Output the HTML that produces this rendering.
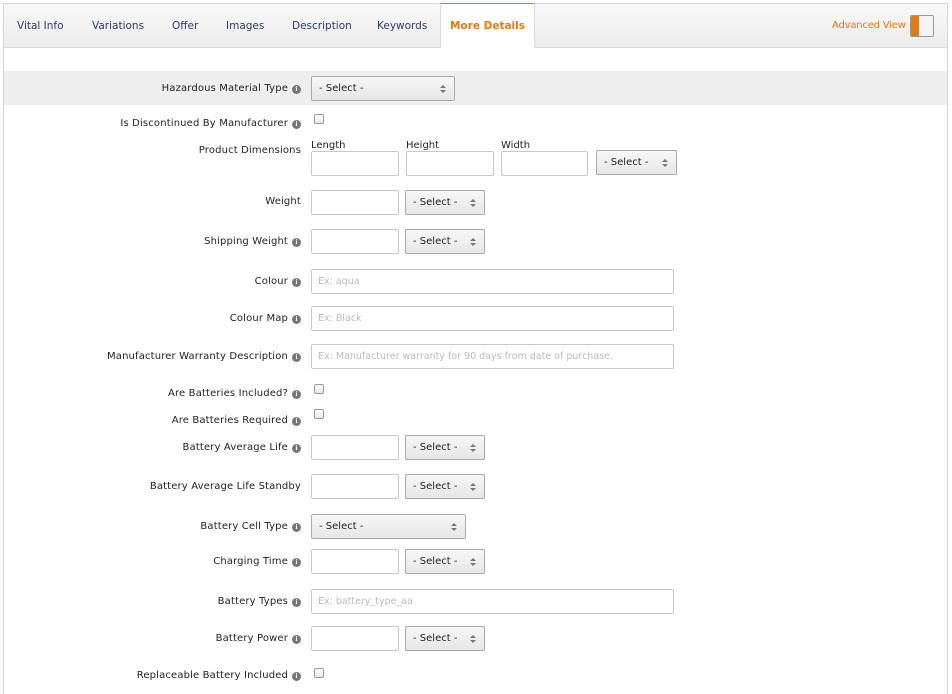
<!DOCTYPE html><html><head><style>
body{margin:0;width:952px;height:675px;overflow:hidden;background:#fff;font-family:"DejaVu Sans","Liberation Sans",sans-serif;font-size:10px;color:#222;position:relative}
.a{position:absolute}
.frame{left:3px;top:3px;width:943px;height:690px;border:1px solid #d6d6d6;border-bottom:none}
.tabs{left:4px;top:4px;width:943px;height:43px;background:linear-gradient(#f8f8f8,#ececec);border-bottom:1px solid #dcdcdc}
.tab{top:20px;color:#2b3a6b;font-size:10.5px}
.more{left:440px;top:3px;width:95px;height:45px;background:#fff;border:1px solid #dcdcdc;border-top:1px solid #e47911;border-bottom:none;box-sizing:border-box;color:#e47911;font-weight:bold;font-size:10.5px;text-align:center;line-height:44px}
.lbl{right:651px;text-align:right;white-space:nowrap;letter-spacing:.15px}
.i{display:inline-block;width:9px;height:9px;border-radius:50%;background:#777;color:#fff;font-size:7px;line-height:9px;text-align:center;font-weight:bold;margin-left:4px;vertical-align:0;font-family:"Liberation Serif",serif}
.in{border:1px solid #c8c8c8;border-radius:2px;background:#fff;box-sizing:border-box;height:25px;color:#bbb;padding-left:6px;line-height:23px;font-size:9.5px}
.sel{border:1px solid #aaa;border-radius:2px;background:linear-gradient(#f7f7f7,#e6e6e6);box-sizing:border-box;height:25px;color:#222;padding-left:7px;line-height:23px;font-size:10px}
.sel:after{content:"";position:absolute;right:8px;top:8px;border:3px solid transparent;border-bottom:3px solid #777;border-top:none}
.sel:before{content:"";position:absolute;right:8px;top:13px;border:3px solid transparent;border-top:3px solid #777;border-bottom:none}
.cb{width:8px;height:8px;border:1px solid #999;border-radius:2px;background:linear-gradient(#fff,#e8e8e8)}
</style></head><body>
<div class="a frame"></div>
<div class="a tabs"></div>
<div class="a tab" style="left:17px">Vital Info</div>
<div class="a tab" style="left:92px">Variations</div>
<div class="a tab" style="left:172px">Offer</div>
<div class="a tab" style="left:226px">Images</div>
<div class="a tab" style="left:292px">Description</div>
<div class="a tab" style="left:377px">Keywords</div>
<div class="a more">More Details</div>
<div class="a" style="left:832px;top:20px;color:#e47911;font-size:10px;letter-spacing:-0.2px">Advanced View</div>
<div class="a" style="left:910px;top:15px;width:22px;height:20px;border:1px solid #999;border-radius:2px;background:#f4f4f4;overflow:hidden"><div style="width:8px;height:20px;background:#e47911"></div></div>
<div class="a" style="left:4px;top:71px;width:943px;height:34px;background:#eeeeee"></div>

<div class="a lbl" style="top:83px">Hazardous Material Type<span class="i">i</span></div>
<div class="a sel" style="left:311px;top:76px;width:144px">- Select -</div>
<div class="a lbl" style="top:118px">Is Discontinued By Manufacturer<span class="i">i</span></div>
<div class="a cb" style="left:314px;top:114px"></div>
<div class="a lbl" style="top:145px">Product Dimensions</div>
<div class="a" style="left:311px;top:140px">Length</div>
<div class="a" style="left:406px;top:140px">Height</div>
<div class="a" style="left:501px;top:140px">Width</div>
<div class="a in" style="left:311px;top:151px;width:88px"></div>
<div class="a in" style="left:406px;top:151px;width:88px"></div>
<div class="a in" style="left:501px;top:151px;width:87px"></div>
<div class="a sel" style="left:596px;top:150px;width:81px">- Select -</div>

<div class="a lbl" style="top:196px">Weight</div>
<div class="a in" style="left:311px;top:190px;width:88px"></div>
<div class="a sel" style="left:405px;top:190px;width:80px">- Select -</div>
<div class="a lbl" style="top:236px">Shipping Weight<span class="i">i</span></div>
<div class="a in" style="left:311px;top:229px;width:88px"></div>
<div class="a sel" style="left:405px;top:229px;width:80px">- Select -</div>
<div class="a lbl" style="top:276px">Colour<span class="i">i</span></div>
<div class="a in" style="left:311px;top:269px;width:363px">Ex: aqua</div>
<div class="a lbl" style="top:313px">Colour Map<span class="i">i</span></div>
<div class="a in" style="left:311px;top:306px;width:363px">Ex: Black</div>
<div class="a lbl" style="top:351px">Manufacturer Warranty Description<span class="i">i</span></div>
<div class="a in" style="left:311px;top:344px;width:363px">Ex: Manufacturer warranty for 90 days from date of purchase.</div>
<div class="a lbl" style="top:388px">Are Batteries Included?<span class="i">i</span></div>
<div class="a cb" style="left:314px;top:384px"></div>
<div class="a lbl" style="top:415px">Are Batteries Required<span class="i">i</span></div>
<div class="a cb" style="left:314px;top:409px"></div>
<div class="a lbl" style="top:442px">Battery Average Life<span class="i">i</span></div>
<div class="a in" style="left:311px;top:435px;width:88px"></div>
<div class="a sel" style="left:405px;top:435px;width:80px">- Select -</div>
<div class="a lbl" style="top:481px">Battery Average Life Standby</div>
<div class="a in" style="left:311px;top:474px;width:88px"></div>
<div class="a sel" style="left:405px;top:474px;width:80px">- Select -</div>
<div class="a lbl" style="top:521px">Battery Cell Type<span class="i">i</span></div>
<div class="a sel" style="left:311px;top:514px;width:155px">- Select -</div>
<div class="a lbl" style="top:556px">Charging Time<span class="i">i</span></div>
<div class="a in" style="left:311px;top:549px;width:88px"></div>
<div class="a sel" style="left:405px;top:549px;width:80px">- Select -</div>
<div class="a lbl" style="top:596px">Battery Types<span class="i">i</span></div>
<div class="a in" style="left:311px;top:589px;width:363px">Ex: battery_type_aa</div>
<div class="a lbl" style="top:633px">Battery Power<span class="i">i</span></div>
<div class="a in" style="left:311px;top:626px;width:88px"></div>
<div class="a sel" style="left:405px;top:626px;width:80px">- Select -</div>
<div class="a lbl" style="top:670px">Replaceable Battery Included<span class="i">i</span></div>
<div class="a cb" style="left:314px;top:668px"></div>
</body></html>
